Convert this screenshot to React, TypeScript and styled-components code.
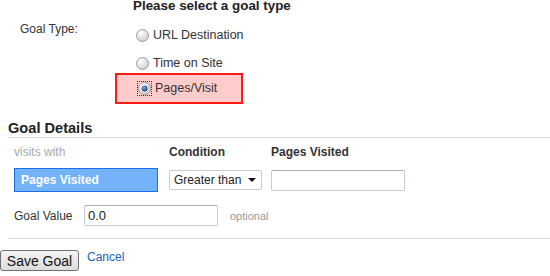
import styled, { createGlobalStyle } from "styled-components";

const GlobalStyle = createGlobalStyle`
  html, body {
    margin: 0;
    padding: 0;
    background: #ffffff;
    overflow: hidden;
  }
  body {
    font-family: "Liberation Sans", Arial, sans-serif;
    color: #333333;
  }
`;

interface GoalOption {
  label: string;
  checked?: boolean;
}

const goalOptions: GoalOption[] = [
  { label: "URL Destination" },
  { label: "Time on Site" },
  { label: "Pages/Visit", checked: true },
];

export default function App() {
  return (
    <>
      <GlobalStyle />
      <Page>
        <TypeSection>
          <TypeLabel>Goal Type:</TypeLabel>
          <TypeChoices>
            <ChoicesTitle>Please select a goal type</ChoicesTitle>
            {goalOptions.map((option) => (
              <ChoiceRow key={option.label} highlighted={!!option.checked}>
                <Radio checked={!!option.checked} />
                <ChoiceText>{option.label}</ChoiceText>
              </ChoiceRow>
            ))}
          </TypeChoices>
        </TypeSection>

        <SectionTitle>Goal Details</SectionTitle>

        <DetailsGrid>
          <ColumnHead muted>visits with</ColumnHead>
          <ColumnHead>Condition</ColumnHead>
          <ColumnHead>Pages Visited</ColumnHead>

          <MetricBox>Pages Visited</MetricBox>
          <SelectBox>
            <span>Greater than</span>
            <SelectArrow />
          </SelectBox>
          <TextField width={134} />
        </DetailsGrid>

        <ValueRow>
          <ValueLabel>Goal Value</ValueLabel>
          <TextField width={134} defaultValue="0.0" />
          <OptionalNote>optional</OptionalNote>
        </ValueRow>

        <Actions>
          <SaveButton type="button">Save Goal</SaveButton>
          <CancelLink href="#">Cancel</CancelLink>
        </Actions>
      </Page>
    </>
  );
}

function Radio({ checked }: { checked: boolean }) {
  return (
    <RadioFrame focused={checked}>
      <svg width="13" height="13" viewBox="0 0 13 13">
        <defs>
          <radialGradient id={checked ? "rgOn" : "rgOff"} cx="0.35" cy="0.3" r="0.8">
            <stop offset="0" stopColor="#ffffff" />
            <stop offset="1" stopColor="#c9c9c9" />
          </radialGradient>
          <radialGradient id="dot" cx="0.4" cy="0.35" r="0.7">
            <stop offset="0" stopColor="#8aa6d6" />
            <stop offset="1" stopColor="#1f3a6e" />
          </radialGradient>
        </defs>
        <circle cx="6.5" cy="6.5" r="6" fill={`url(#${checked ? "rgOn" : "rgOff"})`} stroke="#9b9b9b" />
        {checked && <circle cx="6.5" cy="6.5" r="3" fill="url(#dot)" />}
      </svg>
    </RadioFrame>
  );
}

const Page = styled.div`
  width: 550px;
  height: 276px;
`;

const TypeSection = styled.div`
  display: grid;
  grid-template-columns: 133px 1fr;
`;

const TypeLabel = styled.div`
  padding: 22px 0 0 20px;
  font-size: 12px;
  line-height: 14px;
  color: #333333;
`;

const TypeChoices = styled.div`
  display: flex;
  flex-direction: column;
  margin-top: -2px;
`;

const ChoicesTitle = styled.div`
  font-size: 13.4px;
  font-weight: bold;
  line-height: 16px;
  color: #222222;
  margin-bottom: 7px;
`;

const ChoiceRow = styled.label<{ highlighted: boolean }>`
  display: flex;
  align-items: center;
  gap: 3px;
  height: ${({ highlighted }) => (highlighted ? "27px" : "28px")};
  font-size: 12.5px;
  color: #333333;
  ${({ highlighted }) =>
    highlighted
      ? `
    width: 104px;
    margin: -4px 0 0 -18px;
    padding-left: 20px;
    background: #ffcccc;
    border: 2px solid #ff1a1a;
  `
      : `
    width: 160px;
    padding-left: 2px;
  `}
`;

const RadioFrame = styled.span<{ focused: boolean }>`
  display: flex;
  padding: 1px;
  outline: ${({ focused }) => (focused ? "1px dotted #333333" : "none")};
  outline-offset: -1px;
`;

const ChoiceText = styled.span`
  line-height: 15px;
`;

const SectionTitle = styled.div`
  margin: 15px 0 0 8px;
  padding-bottom: 0;
  border-bottom: 1px solid #d9d9d9;
  font-size: 14.6px;
  font-weight: bold;
  line-height: 18px;
  color: #222222;
`;

const DetailsGrid = styled.div`
  display: grid;
  grid-template-columns: 155px 102px 1fr;
  grid-template-rows: 30px 26px;
  align-items: center;
  padding-left: 14px;
  margin-top: -1px;
`;

const ColumnHead = styled.div<{ muted?: boolean }>`
  font-size: 12px;
  line-height: 14px;
  font-weight: ${({ muted }) => (muted ? "normal" : "bold")};
  color: ${({ muted }) => (muted ? "#aaaaaa" : "#333333")};
`;

const MetricBox = styled.div`
  box-sizing: border-box;
  width: 144px;
  height: 24px;
  display: flex;
  align-items: center;
  padding-left: 6px;
  background: #74b3fb;
  border: 1px solid #1a6ff0;
  color: #ffffff;
  font-size: 12px;
  font-weight: bold;
`;

const SelectBox = styled.div`
  box-sizing: border-box;
  width: 93px;
  height: 20px;
  display: flex;
  align-items: center;
  justify-content: space-between;
  padding: 0 5px 0 4px;
  border: 1px solid #c8cdd4;
  border-radius: 2px;
  font-size: 12px;
  color: #222222;
`;

const SelectArrow = styled.span`
  width: 0;
  height: 0;
  border-left: 4px solid transparent;
  border-right: 4px solid transparent;
  border-top: 4px solid #111111;
`;

const TextField = styled.input<{ width: number }>`
  box-sizing: border-box;
  width: ${({ width }) => width}px;
  height: 21px;
  padding: 0 3px;
  border: 1px solid #c5ccd6;
  border-top-color: #abadb3;
  border-radius: 2px;
  font-family: "Liberation Sans", Arial, sans-serif;
  font-size: 13px;
  color: #222222;
  outline: none;
`;

const ValueRow = styled.div`
  display: flex;
  align-items: center;
  margin: 12px 0 0 14px;
  padding-bottom: 12px;
`;

const ValueLabel = styled.span`
  width: 70px;
  font-size: 12px;
  color: #333333;
`;

const OptionalNote = styled.span`
  margin-left: 12px;
  font-size: 11px;
  color: #999999;
`;

const Actions = styled.div`
  display: flex;
  align-items: flex-start;
  gap: 8px;
  margin-left: 8px;
  padding-top: 11px;
  border-top: 1px solid #d9d9d9;
`;

const SaveButton = styled.button`
  margin-left: -8px;
  height: 21px;
  width: 79px;
  padding: 0;
  border: 1px solid #707070;
  border-radius: 3px;
  background: linear-gradient(#f4f4f4, #dcdcdc);
  font-family: "Liberation Sans", Arial, sans-serif;
  font-size: 14px;
  color: #111111;
`;

const CancelLink = styled.a`
  font-size: 12px;
  line-height: 14px;
  color: #1c5fb0;
  text-decoration: none;
`;
